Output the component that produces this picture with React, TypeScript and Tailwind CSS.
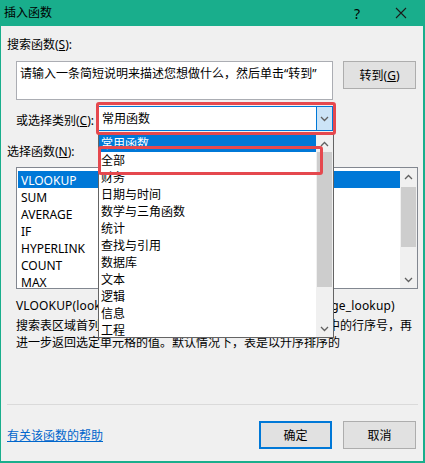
import React from 'react';

const FONT = '"Noto Sans", "Noto Sans CJK SC", sans-serif';

const categories = ['常用函数', '全部', '财务', '日期与时间', '数学与三角函数', '统计', '查找与引用', '数据库', '文本', '逻辑', '信息', '工程'];
const functions = ['VLOOKUP', 'SUM', 'AVERAGE', 'IF', 'HYPERLINK', 'COUNT', 'MAX'];

function Chevron({ up = false }: { up?: boolean }) {
  return (
    <svg width="9" height="6" viewBox="0 0 9 6" className="block">
      <polyline
        points={up ? '1,5 4.5,1.5 8,5' : '1,1 4.5,4.5 8,1'}
        fill="none"
        stroke="#606060"
        strokeWidth="1.3"
      />
    </svg>
  );
}

// vertical scrollbar: arrow, track with thumb, arrow
function ScrollBar({ thumbTop, thumbHeight }: { thumbTop: number; thumbHeight: number }) {
  return (
    <div className="w-[17px] h-full bg-[#f0f0f0] flex flex-col">
      <div className="h-[17px] flex items-center justify-center">
        <Chevron up />
      </div>
      <div className="flex-1 relative">
        <div className="absolute left-[1px] right-[1px] bg-[#cdcdcd]" style={{ top: thumbTop, height: thumbHeight }} />
      </div>
      <div className="h-[17px] flex items-center justify-center">
        <Chevron />
      </div>
    </div>
  );
}

function Button({ label, hot, primary = false }: { label: string; hot?: string; primary?: boolean }) {
  return (
    <div
      className={`w-[73px] h-[28px] flex items-center justify-center bg-[#e1e1e1] text-[12px] text-black ${
        primary ? 'border-2 border-[#0078d7]' : 'border border-[#adadad]'
      }`}
    >
      {label}
      {hot && (
        <>
          (<span className="underline">{hot}</span>)
        </>
      )}
    </div>
  );
}

export default function App() {
  return (
    <div
      className="w-[425px] h-[463px] bg-[#19ae8c] pl-[1px] pr-[2px] pb-[2px] flex flex-col text-black"
      style={{ fontFamily: FONT }}
    >
      {/* title bar */}
      <div className="h-[26px] flex items-center text-[12px] shrink-0">
        <span className="ml-[3px] flex-1">插入函数</span>
        <span className="w-[12px] text-center text-[14px] mr-[32px]">?</span>
        <svg width="12" height="12" viewBox="0 0 12 12" className="mr-[16px]">
          <path d="M1 1L11 11M11 1L1 11" stroke="#1b1b1b" strokeWidth="1.1" />
        </svg>
      </div>

      {/* dialog body */}
      <div className="relative flex-1 bg-[#f0f0f0] pl-[6px] pr-[5px] pt-[10px] text-[12px] leading-[17px]">
        <div>
          搜索函数(<span className="underline">S</span>):
        </div>

        <div className="mt-[8px] pl-[9px] flex items-start gap-[10px]">
          <div className="w-[317px] h-[39px] bg-white border border-[#abadb3] px-[3px] pt-[3px]">
            请输入一条简短说明来描述您想做什么，然后单击“转到”
          </div>
          <Button label="转到" hot="G" />
        </div>

        <div className="mt-[6px] pl-[9px] flex items-center">
          <div className="w-[82px] mt-[3px]">
            或选择类别(<span className="underline">C</span>):
          </div>
          <div className="w-[235px] h-[25px] bg-white border border-[#0078d7] flex">
            <div className="flex-1 pl-[3px] flex items-center">常用函数</div>
            <div className="w-[16px] bg-[#cce4f7] border-l border-[#0078d7] flex items-center justify-center">
              <Chevron />
            </div>
          </div>
        </div>

        <div className="mt-[12px]">
          选择函数(<span className="underline">N</span>):
        </div>

        <div className="mt-[7px] ml-[9px] w-[402px] h-[122px] bg-white border border-[#828790] flex">
          <div className="flex-1 pt-[3px] pl-[1px]">
            {functions.map((f, i) => (
              <div key={f} className={`h-[17px] pl-[3px] pt-[1px] ${i === 0 ? 'bg-[#0078d7] text-white' : ''}`}>
                {f}
              </div>
            ))}
          </div>
          <ScrollBar thumbTop={2} thumbHeight={60} />
        </div>

        <div className="mt-[8px] pl-[9px] tracking-[0.15px]">
          VLOOKUP(lookup_value,table_array,col_index_num,range_lookup)
        </div>
        <div className="mt-[3px] pl-[9px] pr-[4px]">
          搜索表区域首列满足条件的元素，确定待检索单元格在区域中的行序号，再进一步返回选定单元格的值。默认情况下，表是以升序排序的
        </div>

        <div className="mt-[53px] h-[1px] bg-[#dadada]" />

        <div className="mt-[16px] flex items-center">
          <span className="flex-1 text-[#0066cc] underline">有关该函数的帮助</span>
          <Button label="确定" primary />
          <div className="w-[11px]" />
          <Button label="取消" />
          <div className="w-[2px]" />
        </div>

        {/* open category dropdown */}
        <div className="absolute left-[97px] top-[108px] w-[236px] h-[204px] bg-white border border-[#646464] flex overflow-hidden">
          <div className="flex-1 overflow-hidden">
            {categories.map((c, i) => (
              <div key={c} className={`h-[17px] pl-[2px] ${i === 0 ? 'bg-[#0078d7] text-white' : ''}`}>
                {c}
              </div>
            ))}
          </div>
          <ScrollBar thumbTop={0} thumbHeight={135} />
        </div>

        {/* highlight frames */}
        <div className="absolute left-[95px] top-[76px] w-[240px] h-[33px] border-[3px] border-[#e5484e] rounded-[3px]" />
        <div className="absolute left-[97px] top-[120px] w-[225px] h-[29px] border-[3px] border-[#e5484e] rounded-[3px]" />
      </div>
    </div>
  );
}
